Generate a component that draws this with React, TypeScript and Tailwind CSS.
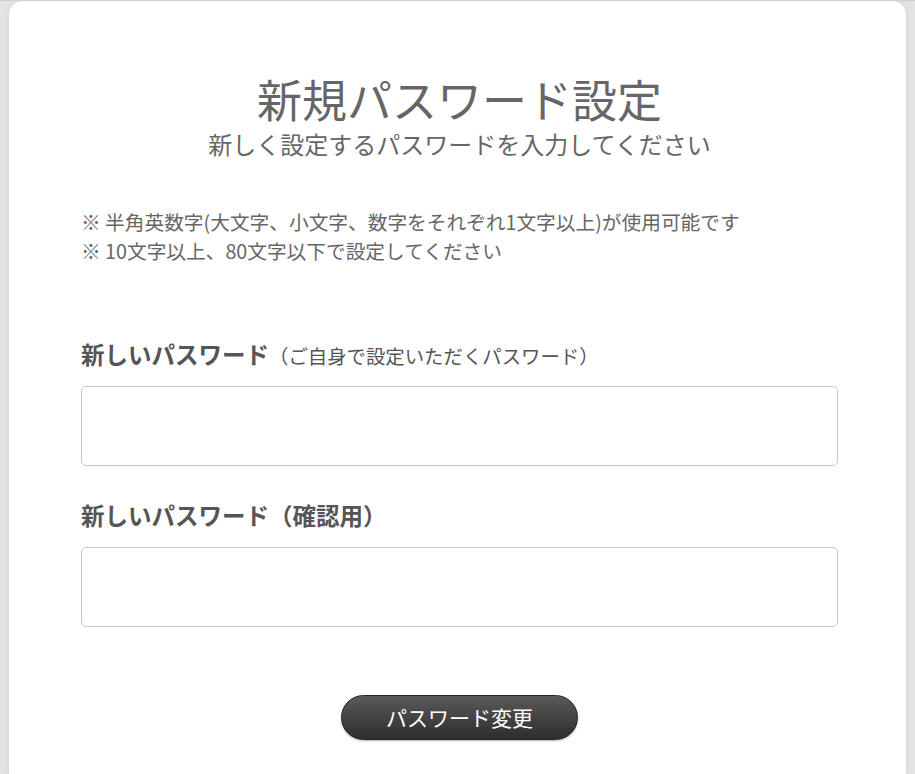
export default function App() {
  return (
    <div
      className="min-h-[774px] w-[915px] bg-[#e4e4e4] border-t border-[#cfcfcf] px-[9px] overflow-hidden"
      style={{ fontFamily: '"Noto Sans CJK JP", "Noto Sans", sans-serif' }}
    >
      <div className="bg-white rounded-[14px] h-[785px] shadow-[0_0_6px_rgba(0,0,0,0.08)] pl-[72px] pr-[68px] pt-[70px]">
        {/* heading */}
        <div className="text-center text-[#666]">
          <h1 className="text-[45px] leading-[56px]">新規パスワード設定</h1>
          <p className="text-[24px] leading-[30px] mt-[2px]">新しく設定するパスワードを入力してください</p>
        </div>

        {/* notes */}
        <div className="mt-[48px] text-[#666] text-[19.7px] leading-[29px]">
          <p>※ 半角英数字(大文字、小文字、数字をそれぞれ1文字以上)が使用可能です</p>
          <p>※ 10文字以上、80文字以下で設定してください</p>
        </div>

        {/* fields */}
        <div className="mt-[74px]">
          <label className="block text-[#555] leading-[30px]">
            <span className="text-[23.5px] font-bold">新しいパスワード</span>
            <span className="text-[19.4px]">（ご自身で設定いただくパスワード）</span>
          </label>
          <input
            type="password"
            className="mt-[14px] block w-full h-[80px] border border-[#c8c8c8] rounded-[5px] px-3 outline-none"
          />
        </div>

        <div className="mt-[34px]">
          <label className="block text-[#555] leading-[30px]">
            <span className="text-[23.5px] font-bold">新しいパスワード（確認用）</span>
          </label>
          <input
            type="password"
            className="mt-[14px] block w-full h-[80px] border border-[#c8c8c8] rounded-[5px] px-3 outline-none"
          />
        </div>

        <div className="mt-[68px] flex justify-center">
          <button className="w-[237px] h-[45px] rounded-full bg-gradient-to-b from-[#5a5a5a] to-[#2e2e2e] border border-[#222] text-white text-[21px] shadow-[0_1px_2px_rgba(0,0,0,0.3)]">
            パスワード変更
          </button>
        </div>
      </div>
    </div>
  );
}
